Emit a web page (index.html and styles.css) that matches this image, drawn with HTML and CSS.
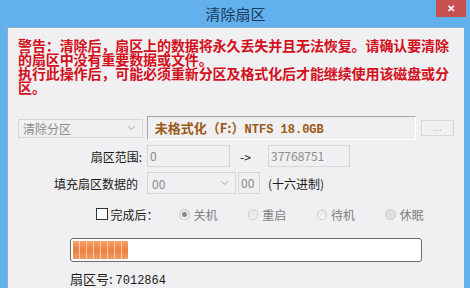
FILE: index.html
```html
<!DOCTYPE html>
<html lang="zh-CN">
<head>
  <meta charset="UTF-8">
  <title>清除扇区</title>
  <link rel="stylesheet" href="styles.css">
</head>
<body>
  <div class="window">
    <div class="titlebar">
      <span class="title">清除扇区</span>
      <button class="close">✕</button>
    </div>

    <div class="content">
      <p class="warning">警告：清除后，扇区上的数据将永久丢失并且无法恢复。请确认要清除的扇区中没有重要数据或文件。<br>执行此操作后，可能必须重新分区及格式化后才能继续使用该磁盘或分区。</p>

      <!-- target row -->
      <div class="row row-target">
        <div class="combo combo-mode">
          <span>清除分区</span>
          <svg class="arrow" width="9" height="6" viewBox="0 0 9 6"><path d="M1 1 L4.5 4.5 L8 1" fill="none" stroke="#c4c4c4" stroke-width="1.2"/></svg>
        </div>
        <div class="target">未格式化（F:）<span class="mono">NTFS 18.0GB</span></div>
        <button class="browse">...</button>
      </div>

      <div class="row">
        <label class="label">扇区范围:</label>
        <div class="input w-from">0</div>
        <span class="arrow-text">-&gt;</span>
        <div class="input w-to">37768751</div>
      </div>

      <div class="row">
        <label class="label label-fill">填充扇区数据的</label>
        <div class="combo combo-fill">
          <span>00</span>
          <svg class="arrow" width="9" height="6" viewBox="0 0 9 6"><path d="M1 1 L4.5 4.5 L8 1" fill="none" stroke="#c4c4c4" stroke-width="1.2"/></svg>
        </div>
        <div class="input w-hex">00</div>
        <span class="hint">(十六进制)</span>
      </div>

      <div class="row row-after">
        <span class="check"></span>
        <span class="after-label">完成后：</span>
        <span class="radio on"></span><span class="radio-text">关机</span>
        <span class="radio"></span><span class="radio-text">重启</span>
        <span class="radio"></span><span class="radio-text">待机</span>
        <span class="radio dim"></span><span class="radio-text">休眠</span>
      </div>

      <div class="progress">
        <div class="progress-fill" style="width: 55px"></div>
      </div>

      <div class="status">扇区号: <span class="num">7012864</span></div>
      <div class="status status-time">
        <span>已用时间:</span>
        <span class="remain">剩余时间:</span>
      </div>
    </div>
  </div>
</body>
</html>
```

FILE: styles.css
```css
* {
  margin: 0;
  padding: 0;
  box-sizing: border-box;
}

body {
  width: 470px;
  height: 288px;
  overflow: hidden;
  background-color: #62b1ec;
  font-family: "Noto Sans CJK SC", sans-serif;
  font-size: 12px;
  color: #1a1a1a;
}

.window {
  height: 288px;
  display: flex;
  flex-direction: column;
  padding: 0 6px 0 7px;
}

.titlebar {
  height: 27px;
  flex-shrink: 0;
  position: relative;
  display: flex;
  justify-content: center;
  align-items: center;
}

.title {
  font-size: 15px;
  line-height: 18px;
  color: #1d3a5c;
  margin-top: 1px;
}

.close {
  position: absolute;
  top: 0;
  right: -2px;
  width: 30px;
  height: 17px;
  border: none;
  background-color: #c75050;
  color: white;
  font-size: 10px;
  font-weight: bold;
  line-height: 17px;
}

.content {
  flex: 1;
  min-height: 0;
  overflow: hidden;
  background-color: #f0eff1;
  border-top: 1px solid #8fb0cc;
  border-left: 1px solid #8fb0cc;
  padding: 10px 10px 0 10px;
}

.warning {
  color: #d3101c;
  font-weight: bold;
  font-size: 14px;
  line-height: 14px;
  letter-spacing: -0.1px;
}

.row {
  display: flex;
  align-items: center;
}

.row-target {
  margin-top: 22px;
  height: 24px;
}

.combo {
  display: flex;
  align-items: center;
  justify-content: space-between;
  border: 1px solid #d6d6d6;
  color: #8c8c8c;
  padding: 0 6px 0 4px;
}

.combo-mode {
  width: 125px;
  height: 19px;
  font-size: 12px;
}

.target {
  margin-left: 4px;
  width: 270px;
  height: 24px;
  border-top: 1px solid #a6a6a6;
  border-left: 1px solid #a6a6a6;
  border-right: 1px solid #ffffff;
  border-bottom: 1px solid #ffffff;
  color: #9a5a17;
  font-weight: bold;
  font-size: 13px;
  line-height: 22px;
  padding-left: 7px;
}

.mono {
  font-family: "Liberation Mono", monospace;
  font-size: 12px;
}

.browse {
  margin-left: 5px;
  width: 33px;
  height: 16px;
  border: 1px solid #d8d8d8;
  background-color: #f0eff1;
  color: #b0b0b0;
  font-size: 10px;
  line-height: 10px;
}

.row + .row {
  margin-top: 5px;
}

.label {
  width: 125px;
  text-align: right;
  padding-right: 1px;
}

.label-fill {
  padding-right: 5px;
}

.input {
  height: 22px;
  border: 1px solid #d6d6d6;
  color: #8c8c8c;
  line-height: 20px;
  padding-left: 2px;
  margin-left: 4px;
}

.w-from {
  width: 83px;
}

.w-to {
  width: 82px;
  margin-left: 13px;
}

.w-hex {
  width: 22px;
  margin-left: 2px;
}

.arrow-text {
  margin-left: 10px;
  width: 15px;
}

.combo-fill {
  width: 89px;
  height: 22px;
  margin-left: 4px;
}

.hint {
  margin-left: 8px;
}

.row.row-after {
  margin-top: 13px;
  height: 14px;
}

.check {
  width: 12px;
  height: 12px;
  border: 1px solid #333;
  background-color: white;
  margin-left: 78px;
}

.after-label {
  margin-left: 3px;
  width: 72px;
}

.radio {
  width: 11px;
  height: 11px;
  border-radius: 50%;
  border: 1px solid #cfcfcf;
  background: linear-gradient(#e4e4e4, #f4f4f4);
  position: relative;
  margin-right: 4px;
}

.radio.on::after {
  content: "";
  position: absolute;
  left: 2px;
  top: 2px;
  width: 5px;
  height: 5px;
  border-radius: 50%;
  background-color: #8a8a8a;
}

.radio.dim {
  background: #dedede;
}

.radio-text {
  color: #7e7e7e;
  width: 57px;
}

.progress {
  margin: 17px 0 0 52px;
  width: 352px;
  height: 24px;
  border: 1px solid #6b6b6b;
  border-radius: 3px;
  background-color: white;
  padding: 2px 2px;
}

.progress-fill {
  height: 100%;
  border-radius: 1px;
  background:
    repeating-linear-gradient(90deg, transparent 0 6px, rgba(255, 255, 255, 0.55) 6px 7px),
    linear-gradient(#f6a36f, #ec7f3c 50%, #f29a62);
}

.status {
  margin-left: 52px;
  margin-top: 10px;
  font-size: 13px;
  line-height: 14px;
}

.num {
  font-family: "Liberation Mono", monospace;
  font-size: 12px;
}

.status-time {
  margin-top: 1px;
  display: flex;
}

.remain {
  margin-left: 68px;
}
```
